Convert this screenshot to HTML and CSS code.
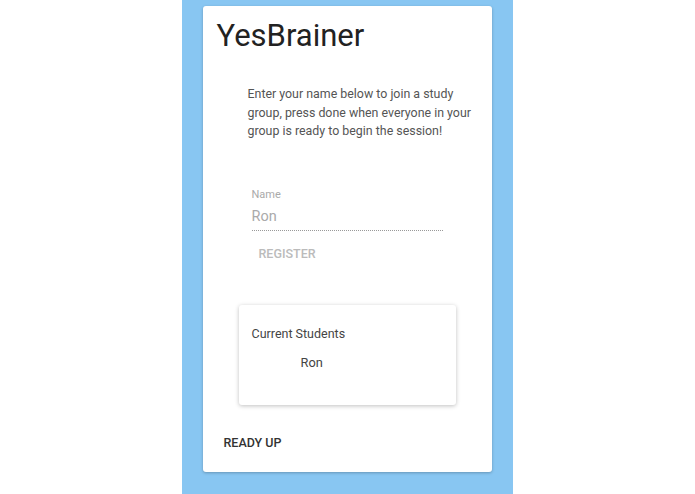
FILE: index.html
```html
<!DOCTYPE html>
<html>
<head>
<meta charset="utf-8">
<link rel="stylesheet" href="styles.css">
</head>
<body>
<div class="page">
  <div class="panel">
    <div class="card">
      <h1 class="title">YesBrainer</h1>
      <p class="intro">Enter your name below to join a study group, press done when everyone in your group is ready to begin the session!</p>
      <div class="field">
        <label class="label">Name</label>
        <div class="input">Ron</div>
      </div>
      <button class="btn register">REGISTER</button>
      <div class="students">
        <div class="students-title">Current Students</div>
        <div class="student">Ron</div>
      </div>
      <button class="btn ready">READY UP</button>
    </div>
  </div>
</div>
</body>
</html>
```

FILE: styles.css
```css
html, body {
  margin: 0;
  padding: 0;
  background: #fff;
  font-family: Roboto, "Liberation Sans", sans-serif;
}
.page {
  width: 695px;
  height: 494px;
  display: flex;
  justify-content: center;
}
.panel {
  margin-left: -1px;
  width: 331px;
  height: 494px;
  background: #88c6f2;
  box-sizing: border-box;
  padding: 6px 21px 0 21px;
}
.card {
  background: #fff;
  height: 466px;
  border-radius: 3px;
  box-shadow: 0 1px 3px rgba(0,0,0,0.25);
  box-sizing: border-box;
  display: flex;
  flex-direction: column;
}
.title {
  margin: 12px 0 0 14px;
  font-size: 31px;
  font-weight: 400;
  color: #222;
  line-height: 36px;
}
.intro {
  margin: 31px 0 0 45px;
  width: 232px;
  font-size: 12.4px;
  line-height: 18.5px;
  color: #555;
}
.field {
  margin: 47px 0 0 49px;
  width: 191px;
  border-bottom: 1px dotted #999;
  padding-bottom: 4px;
}
.label {
  display: block;
  font-size: 11px;
  color: #aaa;
  line-height: 13px;
}
.input {
  margin-top: 7px;
  font-size: 14.5px;
  color: #aaa;
  line-height: 18px;
}
.btn {
  background: none;
  border: none;
  padding: 0;
  font-family: Roboto, "Liberation Sans", sans-serif;
  font-weight: 500;
  font-size: 12.5px;
  text-align: left;
  align-self: flex-start;
}
.register {
  margin: 15px 0 0 56px;
  color: #bbb;
}
.students {
  margin: 44px 0 0 36px;
  width: 217px;
  height: 100px;
  box-sizing: border-box;
  border-radius: 3px;
  box-shadow: 0 1px 4px rgba(0,0,0,0.25);
  padding: 21px 0 0 13px;
}
.students-title {
  font-size: 12.5px;
  color: #444;
  line-height: 16px;
}
.student {
  margin: 13px 0 0 49px;
  font-size: 12.8px;
  color: #444;
  line-height: 16px;
}
.ready {
  margin: 30px 0 0 21px;
  color: #333;
}
```
